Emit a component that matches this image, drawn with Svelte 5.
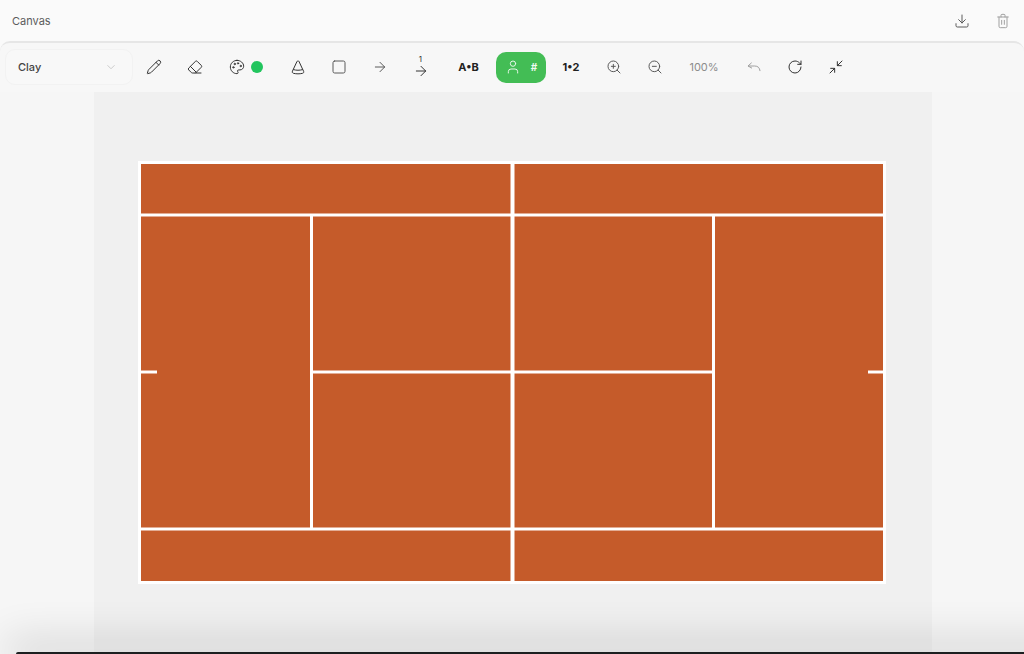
<script>
  let surface = 'Clay';
  let zoom = 100;
</script>

<div class="page">
  <header class="topbar">
    <span class="title">Canvas</span>
    <div class="topbar-actions">
      <button class="icon-btn small" aria-label="Download">
        <svg viewBox="0 0 24 24" class="icon grey-dark"><path d="M12 3v12" /><path d="m7 10 5 5 5-5" /><path d="M3 16v3a2 2 0 0 0 2 2h14a2 2 0 0 0 2-2v-3" /></svg>
      </button>
      <button class="icon-btn small" aria-label="Delete">
        <svg viewBox="0 0 24 24" class="icon grey"><path d="M4 6h16" /><path d="M6 6v14a2 2 0 0 0 2 2h8a2 2 0 0 0 2-2V6" /><path d="M9 6V3.500a1.500 1.500 0 0 1 1.500-1.500h3A1.500 1.500 0 0 1 15 3.500V6" /><path d="M10 11v6" /><path d="M14 11v6" /></svg>
      </button>
    </div>
  </header>

  <div class="toolbar">
    <div class="select">
      <span>{surface}</span>
      <svg viewBox="0 0 24 24" class="chevron"><path d="m6 9 6 6 6-6" /></svg>
    </div>

    <button class="icon-btn" aria-label="Pencil">
      <svg viewBox="0 0 24 24" class="icon"><path d="M21.174 6.812a1 1 0 0 0-3.986-3.987L3.842 16.174a2 2 0 0 0-.5.83l-1.321 4.352a.5.5 0 0 0 .623.622l4.353-1.32a2 2 0 0 0 .83-.497z" /><path d="m15 5 4 4" /></svg>
    </button>
    <button class="icon-btn" aria-label="Eraser">
      <svg viewBox="0 0 24 24" class="icon"><path d="M21 21H8a2 2 0 0 1-1.420-.587l-3.994-3.999a2 2 0 0 1 0-2.828l10-10a2 2 0 0 1 2.829 0l5.999 6a2 2 0 0 1 0 2.828L12.834 21" /><path d="m5.082 11.090 8.828 8.828" /></svg>
    </button>
    <button class="icon-btn colour" aria-label="Colour">
      <svg viewBox="0 0 24 24" class="icon"><path d="M12 2C6.500 2 2 6.500 2 12s4.500 10 10 10c.926 0 1.648-.746 1.648-1.688 0-.437-.18-.835-.437-1.125-.29-.289-.438-.652-.438-1.125a1.640 1.640 0 0 1 1.668-1.668h1.996c3.051 0 5.555-2.503 5.555-5.554C21.965 6.012 17.461 2 12 2z" /><circle cx="13.500" cy="6.500" r="1" /><circle cx="17.500" cy="10.500" r="1" /><circle cx="6.500" cy="12.500" r="1" /><circle cx="8.500" cy="7.500" r="1" /></svg>
      <span class="dot"></span>
    </button>
    <button class="icon-btn" aria-label="Cone">
      <svg viewBox="0 0 24 24" class="icon"><path d="M10.500 3.700a1.700 1.700 0 0 1 3 0l7 15c.6 1.500-.3 2.300-1.800 2.800-4.300 1-9.100 1-13.400 0-1.500-.5-2.400-1.300-1.800-2.800z" /><path d="M5.500 16c4 1.200 9 1.200 13 0" /></svg>
    </button>
    <button class="icon-btn" aria-label="Rectangle">
      <svg viewBox="0 0 24 24" class="icon grey-dark"><rect x="3" y="3" width="18" height="18" rx="2.500" /></svg>
    </button>
    <button class="icon-btn" aria-label="Arrow">
      <svg viewBox="0 0 24 24" class="icon grey-dark"><path d="M5 12h14" /><path d="m12 5 7 7-7 7" /></svg>
    </button>
    <button class="icon-btn numbered" aria-label="Numbered arrow">
      <span class="arrow-number">1</span>
      <svg viewBox="0 0 24 24" class="icon"><path d="M5 12h14" /><path d="m12 5 7 7-7 7" /></svg>
    </button>
    <button class="text-btn ab">A•B</button>
    <button class="player-btn" aria-label="Player number">
      <svg viewBox="0 0 24 24" class="icon white"><path d="M19 21v-2a4 4 0 0 0-4-4H9a4 4 0 0 0-4 4v2" /><circle cx="12" cy="7" r="4" /></svg>
      <span>#</span>
    </button>
    <button class="text-btn num">1•2</button>
    <button class="icon-btn" aria-label="Zoom in">
      <svg viewBox="0 0 24 24" class="icon grey-dark"><circle cx="11" cy="11" r="8" /><path d="m21 21-4.300-4.300" /><path d="M11 8v6" /><path d="M8 11h6" /></svg>
    </button>
    <button class="icon-btn" aria-label="Zoom out">
      <svg viewBox="0 0 24 24" class="icon grey-dark"><circle cx="11" cy="11" r="8" /><path d="m21 21-4.300-4.300" /><path d="M8 11h6" /></svg>
    </button>
    <span class="zoom-level">{zoom}%</span>
    <button class="icon-btn" aria-label="Undo">
      <svg viewBox="0 0 24 24" class="icon grey"><path d="M8 6 3 10.500l5.500 3" /><path d="M3.500 10.500H13a8 8 0 0 1 8 7" /></svg>
    </button>
    <button class="icon-btn" aria-label="Redo">
      <svg viewBox="0 0 24 24" class="icon"><path d="M21 12a9 9 0 1 1-9-9c2.520 0 4.930 1 6.740 2.740L21 8" /><path d="M21 3v5h-5" /></svg>
    </button>
    <button class="icon-btn" aria-label="Collapse">
      <svg viewBox="0 0 24 24" class="icon"><path d="m14 10 7-7" /><path d="M20 10h-6V4" /><path d="m3 21 7-7" /><path d="M4 14h6v6" /></svg>
    </button>
  </div>

  <main class="stage">
    <div class="canvas">
      <svg class="court" viewBox="0 0 749 423" width="749" height="423">
        <rect class="surface" x="1.500" y="1.500" width="745" height="420" />
        <line x1="2" y1="54" x2="746" y2="54" />
        <line x1="2" y1="368" x2="746" y2="368" />
        <line x1="173.500" y1="54" x2="173.500" y2="368" />
        <line x1="575.500" y1="54" x2="575.500" y2="368" />
        <line x1="173.500" y1="211" x2="575.500" y2="211" />
        <line class="net" x1="374.500" y1="2" x2="374.500" y2="421" />
        <line x1="2" y1="211" x2="19" y2="211" />
        <line x1="730" y1="211" x2="746" y2="211" />
      </svg>
    </div>
  </main>

  <div class="window-edge"></div>
</div>

<style>
  :global(body) {
    margin: 0;
    background: #f6f6f6;
    font-family: Inter, "Liberation Sans", sans-serif;
  }

  .page {
    display: flex;
    flex-direction: column;
    height: 654px;
    overflow: hidden;
    background: #fafafa;
    position: relative;
  }

  /* ========== Header ========== */
  .topbar {
    display: flex;
    align-items: center;
    justify-content: space-between;
    height: 41px;
    padding: 0 1px 0 12px;
    flex-shrink: 0;
  }

  .title {
    font-size: 11px;
    color: #5c5c5c;
  }

  .topbar-actions {
    display: flex;
  }

  /* ========== Toolbar ========== */
  .toolbar {
    display: flex;
    align-items: center;
    height: 48px;
    padding: 0 0 1px 5px;
    flex-shrink: 0;
    background: #f7f7f7;
    border-top: 2px solid #e6e6e6;
    border-radius: 10px 10px 0 0;
  }

  .select {
    display: flex;
    align-items: center;
    justify-content: space-between;
    box-sizing: border-box;
    width: 128px;
    height: 36px;
    padding: 0 14px 0 12px;
    font-size: 11px;
    font-weight: 500;
    color: #444;
    background: #f8f8f8;
    border: 1px solid #f2f2f2;
    border-radius: 10px;
  }

  .chevron {
    width: 14px;
    height: 14px;
    fill: none;
    stroke: #c4c4c4;
    stroke-width: 1.500;
  }

  button {
    padding: 0;
    border: none;
    background: none;
    font-family: inherit;
  }

  .icon-btn {
    display: flex;
    align-items: center;
    justify-content: center;
    width: 41px;
    height: 36px;
    flex-shrink: 0;
  }

  .icon-btn.small {
    width: 40.500px;
  }

  .icon {
    width: 16px;
    height: 16px;
    fill: none;
    stroke: #333;
    stroke-width: 1.500;
    stroke-linecap: round;
    stroke-linejoin: round;
  }

  .icon.grey {
    stroke: #a0a0a0;
  }

  .icon.grey-dark {
    stroke: #5a5a5a;
  }

  .icon.white {
    stroke: #e6f6e8;
  }

  .colour {
    width: 62px;
    gap: 6px;
  }

  .dot {
    width: 12px;
    height: 12px;
    border-radius: 50%;
    background: #22c55e;
  }

  .numbered {
    position: relative;
  }

  .arrow-number {
    position: absolute;
    top: 6px;
    left: 0;
    right: 0;
    text-align: center;
    font-size: 8px;
    line-height: 8px;
    color: #333;
  }

  .numbered .icon {
    margin-top: 8px;
  }

  .text-btn {
    font-size: 11px;
    font-weight: 700;
    color: #222;
    flex-shrink: 0;
  }

  .ab {
    width: 55px;
  }

  .num {
    box-sizing: border-box;
    width: 47px;
    padding-left: 3px;
  }

  .player-btn {
    display: flex;
    align-items: center;
    justify-content: center;
    gap: 10px;
    box-sizing: border-box;
    width: 50px;
    height: 31px;
    flex-shrink: 0;
    border-radius: 10px;
    background: #43bd55;
    color: #f0faf1;
    font-size: 10px;
    font-weight: 700;
  }

  .zoom-level {
    width: 58px;
    flex-shrink: 0;
    text-align: center;
    font-size: 11px;
    color: #8c8c8c;
  }

  /* ========== Canvas ========== */
  .stage {
    flex: 1;
    display: flex;
    background: #f6f6f6;
    padding-left: 94px;
    min-height: 0;
  }

  .canvas {
    box-sizing: border-box;
    width: 838px;
    height: 100%;
    padding: 69px 0 0 44px;
    background: #f0f0f0;
  }

  .court {
    display: block;
    flex-shrink: 0;
  }

  .court line {
    stroke: #fff;
    stroke-width: 3;
  }

  .court .net {
    stroke-width: 4;
  }

  .surface {
    fill: #c55b2a;
    stroke: #fff;
    stroke-width: 3;
  }

  /* soft shadow of the window underneath, at the screenshot's bottom edge */
  .window-edge {
    position: absolute;
    left: 16px;
    right: -60px;
    bottom: 0;
    height: 2px;
    background: #1c1f20;
    box-shadow: 0 -2px 40px 10px rgba(0, 0, 0, 0.16);
    border-radius: 6px 0 0 0;
  }
</style>
